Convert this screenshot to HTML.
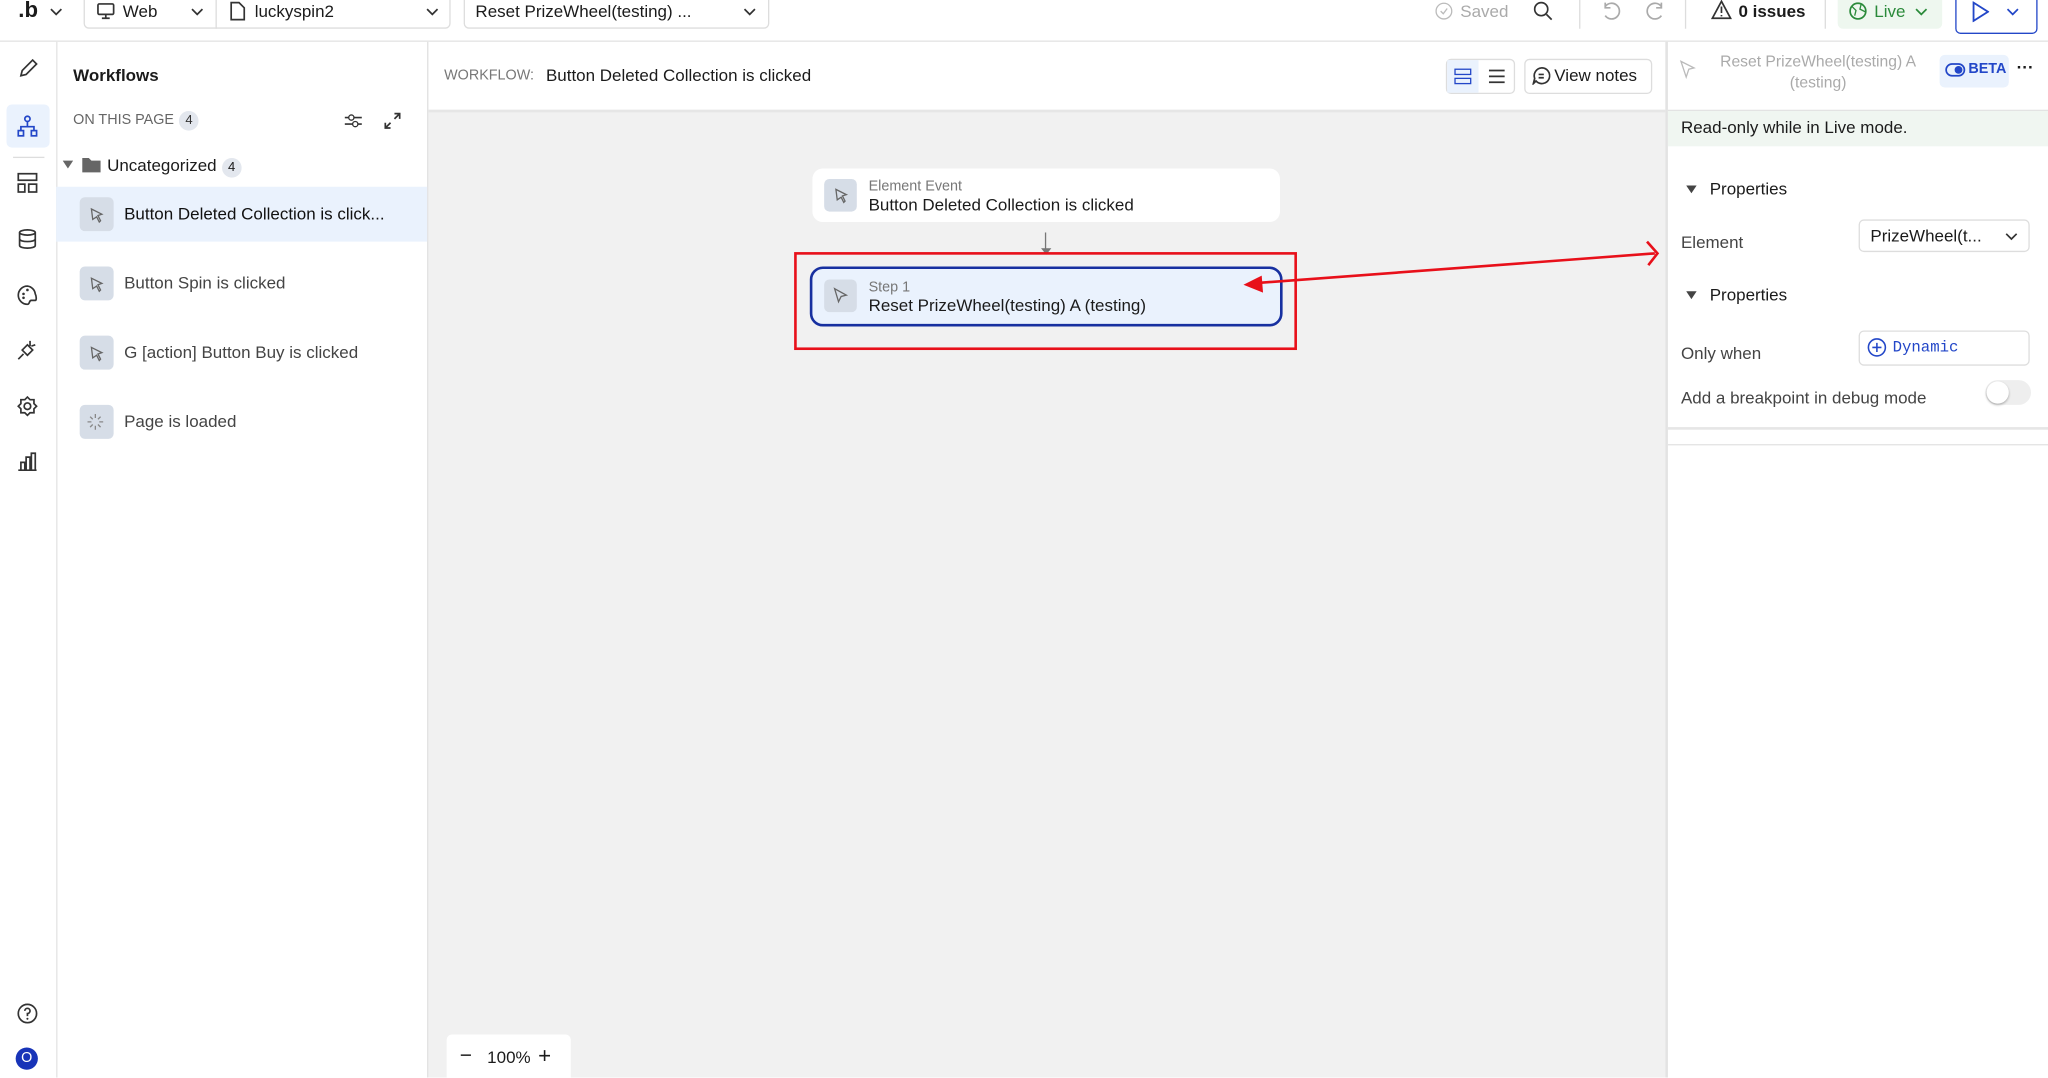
<!DOCTYPE html>
<html><head><meta charset="utf-8">
<style>
*{box-sizing:border-box;margin:0;padding:0}
html,body{width:2048px;height:1077px;overflow:hidden;background:#fff}
#w{position:absolute;left:0;top:0;width:1568px;height:825px;transform:scale(1.30612);transform-origin:0 0;font-family:"Liberation Sans",sans-serif;color:#1b1b1b;font-size:13px;overflow:hidden}
.a{position:absolute}
.ic{stroke:#333;fill:none;stroke-width:1.3}
.gray{color:#777}
.item{position:absolute;left:43px;width:284px;height:42px}
.item .sq{position:absolute;left:18px;top:8px;width:26px;height:26px;background:#d6dde7;border-radius:4px}
.item .t{position:absolute;left:52px;top:13px;font-size:13px}
.badge{display:inline-block;width:15px;height:15px;border-radius:8px;background:#e3e7ee;font-size:10px;text-align:center;line-height:15px;margin-left:4px}
</style></head><body><div id="w">
<!-- top bar -->
<div class="a" style="left:0;top:0;width:1568px;height:32px;border-bottom:1px solid #e3e3e3;background:#fff"></div>
<div class="a" style="left:14px;top:-2px;font-size:17px;font-weight:bold">.b</div>
<svg class="a" style="left:38px;top:5px" width="10" height="8"><path class="ic" d="M1 2l4 4 4-4"/></svg>
<div class="a" style="left:64px;top:-4px;width:281px;height:26px;border:1px solid #ddd;border-radius:4px"></div>
<div class="a" style="left:165px;top:0;width:1px;height:22px;background:#ddd"></div>
<svg class="a" style="left:74px;top:2px" width="14" height="13"><rect class="ic" x="1" y="1" width="12" height="8" rx="1"/><path class="ic" d="M7 9v3M4 12h6"/></svg>
<div class="a" style="left:94px;top:1px">Web</div>
<svg class="a" style="left:146px;top:5px" width="10" height="8"><path class="ic" d="M1 2l4 4 4-4"/></svg>
<svg class="a" style="left:176px;top:1px" width="12" height="15"><path class="ic" d="M1 1h6l4 4v9H1z"/></svg>
<div class="a" style="left:195px;top:1px">luckyspin2</div>
<svg class="a" style="left:326px;top:5px" width="10" height="8"><path class="ic" d="M1 2l4 4 4-4"/></svg>
<div class="a" style="left:355px;top:-4px;width:234px;height:26px;border:1px solid #ddd;border-radius:4px"></div>
<div class="a" style="left:364px;top:1px">Reset PrizeWheel(testing) ...</div>
<svg class="a" style="left:569px;top:5px" width="10" height="8"><path class="ic" d="M1 2l4 4 4-4"/></svg>
<svg class="a" style="left:1098px;top:1px" width="15" height="15"><circle cx="7.5" cy="7.5" r="6" fill="none" stroke="#bbb"/><path d="M5 7.5l2 2 3-4" fill="none" stroke="#bbb"/></svg>
<div class="a" style="left:1118px;top:1px;color:#aaa">Saved</div>
<svg class="a" style="left:1173px;top:0" width="16" height="16"><circle class="ic" cx="7" cy="7" r="5"/><path class="ic" d="M11 11l4 4"/></svg>
<div class="a" style="left:1209px;top:0;width:1px;height:22px;background:#ddd"></div>
<svg class="a" style="left:1226px;top:1px" width="15" height="15"><path d="M3 4a6 6 0 1 1 0 7M3 1v4h4" fill="none" stroke="#aaa" stroke-width="1.3"/></svg>
<svg class="a" style="left:1260px;top:1px" width="15" height="15"><path d="M12 4a6 6 0 1 0 0 7M12 1v4H8" fill="none" stroke="#aaa" stroke-width="1.3"/></svg>
<div class="a" style="left:1290px;top:0;width:1px;height:22px;background:#ddd"></div>
<svg class="a" style="left:1310px;top:0" width="16" height="15"><path class="ic" d="M8 1l7 13H1z"/><path class="ic" d="M8 5v5M8 11.5v1"/></svg>
<div class="a" style="left:1331px;top:1px;font-weight:bold;font-size:13px">0 issues</div>
<div class="a" style="left:1397px;top:0;width:1px;height:22px;background:#ddd"></div>
<div class="a" style="left:1407px;top:-4px;width:80px;height:26px;background:#eef7ef;border-radius:4px"></div>
<svg class="a" style="left:1415px;top:1px" width="15" height="15"><circle cx="7.5" cy="7.5" r="6" fill="none" stroke="#2a8a3a" stroke-width="1.3"/><path d="M3 4l3 3-1 4M10 2l-1 4 4 2" fill="none" stroke="#2a8a3a"/></svg>
<div class="a" style="left:1435px;top:1px;color:#2a8a3a">Live</div>
<svg class="a" style="left:1466px;top:5px" width="10" height="8"><path d="M1 2l4 4 4-4" fill="none" stroke="#2a8a3a" stroke-width="1.3"/></svg>
<div class="a" style="left:1497px;top:-4px;width:63px;height:30px;border:1.5px solid #2347c8;border-radius:4px"></div>
<svg class="a" style="left:1509px;top:1px" width="14" height="16"><path d="M2 1l11 7-11 7z" fill="none" stroke="#2347c8" stroke-width="1.4"/></svg>
<svg class="a" style="left:1536px;top:5px" width="10" height="8"><path d="M1 2l4 4 4-4" fill="none" stroke="#2347c8" stroke-width="1.3"/></svg>

<!-- icon rail -->
<div class="a" style="left:43px;top:32px;width:1px;height:793px;background:#e3e3e3"></div>
<svg class="a" style="left:13px;top:45px" width="16" height="16"><path class="ic" d="M3 13l1-4 8-8 3 3-8 8z"/></svg>
<div class="a" style="left:5px;top:80px;width:33px;height:33px;background:#eaf2fd;border-radius:4px"></div>
<svg class="a" style="left:13px;top:88px" width="16" height="18"><g fill="none" stroke="#2347c8" stroke-width="1.3"><circle cx="8" cy="3" r="2"/><path d="M8 5v4M3 12V9h10v3"/><rect x="1" y="12" width="4" height="4"/><rect x="11" y="12" width="4" height="4"/></g></svg>
<div class="a" style="left:10px;top:120px;width:24px;height:1px;background:#ddd"></div>
<svg class="a" style="left:13px;top:132px" width="16" height="16"><rect class="ic" x="1" y="1" width="14" height="5"/><rect class="ic" x="1" y="9" width="5" height="6"/><rect class="ic" x="9" y="9" width="6" height="6"/></svg>
<svg class="a" style="left:13px;top:175px" width="16" height="16"><ellipse class="ic" cx="8" cy="3" rx="6" ry="2"/><path class="ic" d="M2 3v10c0 2.6 12 2.6 12 0V3M2 8c0 2.6 12 2.6 12 0"/></svg>
<svg class="a" style="left:13px;top:218px" width="16" height="16"><path class="ic" d="M8 1a7 7 0 0 0 0 14c2 0 1-3 3-3h3c1 0 1-3 0-5A7 7 0 0 0 8 1z"/><circle cx="5" cy="7" r="1" fill="#333"/><circle cx="8" cy="4" r="1" fill="#333"/><circle cx="5" cy="10" r="1" fill="#333"/></svg>
<svg class="a" style="left:13px;top:260px" width="16" height="16"><path class="ic" d="M10 1v4M14 4l-3 1M4 8l4-4 4 4-4 4zM5 11l-4 4"/></svg>
<svg class="a" style="left:13px;top:303px" width="16" height="16"><circle class="ic" cx="8" cy="8" r="2.5"/><path class="ic" d="M8 1l2 2 3 0 0 3 2 2-2 2 0 3-3 0-2 2-2-2-3 0 0-3-2-2 2-2 0-3 3 0z"/></svg>
<svg class="a" style="left:13px;top:345px" width="16" height="16"><path class="ic" d="M1 15h14M3 15V9h3v6M7 15V5h3v10M11 15V2h3v13"/></svg>
<svg class="a" style="left:13px;top:768px" width="16" height="16"><circle class="ic" cx="8" cy="8" r="7"/><path class="ic" d="M6 6a2 2 0 1 1 2 2v2"/><circle cx="8" cy="12" r=".8" fill="#333"/></svg>
<div class="a" style="left:12px;top:802px;width:17px;height:17px;border-radius:9px;background:#1834b8;color:#fff;font-size:11px;text-align:center;line-height:17px">O</div>

<!-- workflows panel -->
<div class="a" style="left:327px;top:32px;width:1px;height:793px;background:#e0e0e0"></div>
<div class="a" style="left:56px;top:50px;font-weight:bold;font-size:13px">Workflows</div>
<div class="a" style="left:56px;top:85px;font-size:11px;color:#666">ON THIS PAGE<span class="badge" style="color:#333">4</span></div>
<svg class="a" style="left:263px;top:85px" width="15" height="15"><path class="ic" d="M1 5h13M1 10h13"/><circle cx="6" cy="5" r="2" fill="#fff" stroke="#333"/><circle cx="9" cy="10" r="2" fill="#fff" stroke="#333"/></svg>
<svg class="a" style="left:293px;top:85px" width="15" height="15"><path class="ic" d="M9 2h4v4M13 2L9 6M6 13H2V9M2 13l4-4"/></svg>
<svg class="a" style="left:48px;top:122px" width="8" height="8"><path d="M0 1h8L4 7z" fill="#666"/></svg>
<svg class="a" style="left:62px;top:119px" width="16" height="14"><path d="M1 2h5l2 2h7v9H1z" fill="#666"/></svg>
<div class="a" style="left:82px;top:119px;font-size:13px">Uncategorized<span class="badge">4</span></div>
<div class="item" style="top:143px;background:#eaf2fd"><div class="sq"></div><div class="t" style="color:#111">Button Deleted Collection is click...</div></div>
<div class="item" style="top:196px"><div class="sq"></div><div class="t" style="color:#444">Button Spin is clicked</div></div>
<div class="item" style="top:249px"><div class="sq"></div><div class="t" style="color:#444">G [action] Button Buy is clicked</div></div>
<div class="item" style="top:302px"><div class="sq"></div><div class="t" style="color:#444">Page is loaded</div></div>
<svg class="a" style="left:66px;top:157px" width="14" height="14"><path d="M4 3l8 4-3 1 2 4-1 1-2-4-3 2z" fill="none" stroke="#666"/></svg>
<svg class="a" style="left:66px;top:210px" width="14" height="14"><path d="M4 3l8 4-3 1 2 4-1 1-2-4-3 2z" fill="none" stroke="#666"/></svg>
<svg class="a" style="left:66px;top:263px" width="14" height="14"><path d="M4 3l8 4-3 1 2 4-1 1-2-4-3 2z" fill="none" stroke="#666"/></svg>
<svg class="a" style="left:66px;top:316px" width="14" height="14"><path d="M7 1v3M7 10v3M1 7h3M10 7h3M3 3l2 2M9 9l2 2M3 11l2-2M9 5l2-2" stroke="#888"/></svg>

<!-- canvas -->
<div class="a" style="left:328px;top:84px;width:947px;height:741px;background:#f1f1f1;border-top:2px solid #e6e6e6"></div>
<div class="a" style="left:340px;top:52px;font-size:11px;color:#777">WORKFLOW:</div>
<div class="a" style="left:418px;top:50px;font-size:13px">Button Deleted Collection is clicked</div>
<div class="a" style="left:1107px;top:45px;width:53px;height:27px;border:1px solid #ddd;border-radius:4px"></div>
<div class="a" style="left:1108px;top:46px;width:24px;height:25px;background:#eaf2fd"></div>
<svg class="a" style="left:1113px;top:52px" width="14" height="13"><rect x="1" y="1" width="12" height="4" fill="none" stroke="#2347c8"/><rect x="1" y="8" width="12" height="4" fill="none" stroke="#2347c8"/></svg>
<svg class="a" style="left:1139px;top:52px" width="14" height="13"><path class="ic" d="M1 2h12M1 6.5h12M1 11h12"/></svg>
<div class="a" style="left:1167px;top:45px;width:98px;height:27px;border:1px solid #ddd;border-radius:4px;background:#fff"></div>
<svg class="a" style="left:1173px;top:51px" width="14" height="14"><path class="ic" d="M7 1a6 6 0 1 1-4 10l-2 2 1-4A6 6 0 0 1 7 1zM5 6h4M5 8.5h4"/></svg>
<div class="a" style="left:1190px;top:50px;font-size:13px">View notes</div>

<div class="a" style="left:622px;top:129px;width:358px;height:41px;background:#fff;border-radius:8px"></div>
<div class="a" style="left:631px;top:137px;width:25px;height:25px;background:#d6dde7;border-radius:4px"></div>
<svg class="a" style="left:636px;top:142px" width="14" height="14"><path d="M4 3l8 4-3 1 2 4-1 1-2-4-3 2z" fill="none" stroke="#666"/></svg>
<div class="a" style="left:665px;top:137px;font-size:11px;color:#777">Element Event</div>
<div class="a" style="left:665px;top:149px;font-size:13px">Button Deleted Collection is clicked</div>
<div class="a" style="left:800px;top:178px;width:1px;height:16px;background:#777"></div>
<svg class="a" style="left:797px;top:190px" width="8" height="6"><path d="M0 0h8L4 5z" fill="#777"/></svg>

<div class="a" style="left:620px;top:204px;width:362px;height:46px;background:#eaf2fd;border:2.5px solid #1730a0;border-radius:10px"></div>
<div class="a" style="left:631px;top:214px;width:25px;height:25px;background:#d6dde7;border-radius:4px"></div>
<svg class="a" style="left:636px;top:219px" width="14" height="14"><path d="M3 2l9 5-4 1-2 4z" fill="none" stroke="#666"/></svg>
<div class="a" style="left:665px;top:214px;font-size:11px;color:#777">Step 1</div>
<div class="a" style="left:665px;top:226px;font-size:13px">Reset PrizeWheel(testing) A (testing)</div>
<div class="a" style="left:608px;top:193px;width:385px;height:75px;border:2px solid #e8101a"></div>
<svg class="a" style="left:0;top:0" width="1568" height="825"><line x1="958" y1="217" x2="1267" y2="194" stroke="#e8101a" stroke-width="2"/><path d="M952 218l14-7 1 13z" fill="#e8101a"/><path d="M1261 185l8 9-7 9" fill="none" stroke="#e8101a" stroke-width="2"/></svg>

<div class="a" style="left:342px;top:792px;width:95px;height:40px;background:#fff;border-radius:4px"></div>
<div class="a" style="left:352px;top:800px;font-size:16px">−</div>
<div class="a" style="left:373px;top:802px;font-size:13px">100%</div>
<div class="a" style="left:412px;top:799px;font-size:17px">+</div>

<!-- right panel -->
<div class="a" style="left:1275px;top:32px;width:2px;height:793px;background:#e3e3e3"></div>
<div class="a" style="left:1277px;top:84px;width:291px;height:1px;background:#e3e3e3"></div>
<svg class="a" style="left:1285px;top:45px" width="14" height="16"><path d="M2 2l10 5-4 1-2 6z" fill="none" stroke="#bbb"/></svg>
<div class="a" style="left:1300px;top:39px;width:184px;text-align:center;font-size:12px;color:#aaa;line-height:16px">Reset PrizeWheel(testing) A<br>(testing)</div>
<div class="a" style="left:1485px;top:42px;width:53px;height:25px;background:#eaf2fd;border-radius:4px"></div>
<svg class="a" style="left:1489px;top:48px" width="16" height="12"><rect x="1" y="1" width="14" height="9" rx="4.5" fill="none" stroke="#2347c8" stroke-width="1.3"/><circle cx="10.5" cy="5.5" r="3" fill="#2347c8"/></svg>
<div class="a" style="left:1507px;top:47px;font-size:11px;font-weight:bold;color:#2347c8">BETA</div>
<div class="a" style="left:1544px;top:44px;font-size:13px;font-weight:bold">···</div>
<div class="a" style="left:1277px;top:85px;width:291px;height:27px;background:#f0f6f1"></div>
<div class="a" style="left:1287px;top:90px;font-size:13px">Read-only while in Live mode.</div>
<svg class="a" style="left:1291px;top:141px" width="8" height="8"><path d="M0 1h8L4 7z" fill="#444"/></svg>
<div class="a" style="left:1309px;top:137px;font-size:13px">Properties</div>
<div class="a" style="left:1287px;top:178px;font-size:13px;color:#444">Element</div>
<div class="a" style="left:1423px;top:168px;width:131px;height:25px;border:1px solid #ddd;border-radius:4px"></div>
<div class="a" style="left:1432px;top:173px;font-size:13px">PrizeWheel(t...</div>
<svg class="a" style="left:1535px;top:177px" width="10" height="8"><path class="ic" d="M1 2l4 4 4-4"/></svg>
<svg class="a" style="left:1291px;top:222px" width="8" height="8"><path d="M0 1h8L4 7z" fill="#444"/></svg>
<div class="a" style="left:1309px;top:218px;font-size:13px">Properties</div>
<div class="a" style="left:1287px;top:263px;font-size:13px;color:#444">Only when</div>
<div class="a" style="left:1423px;top:253px;width:131px;height:27px;border:1px solid #ddd;border-radius:4px"></div>
<svg class="a" style="left:1429px;top:258px" width="16" height="16"><circle cx="8" cy="8" r="6.5" fill="none" stroke="#2347c8" stroke-width="1.2"/><path d="M8 4.5v7M4.5 8h7" stroke="#2347c8" stroke-width="1.2"/></svg>
<div class="a" style="left:1449px;top:259px;font-size:12px;color:#2347c8;font-family:'Liberation Mono',monospace">Dynamic</div>
<div class="a" style="left:1287px;top:297px;font-size:13px;color:#444">Add a breakpoint in debug mode</div>
<div class="a" style="left:1520px;top:291px;width:35px;height:19px;border-radius:10px;background:#eee"></div>
<div class="a" style="left:1521px;top:292px;width:17px;height:17px;border-radius:9px;background:#fff;box-shadow:0 1px 2px rgba(0,0,0,.3)"></div>
<div class="a" style="left:1277px;top:327px;width:291px;height:2px;background:#e6e6e6"></div>
<div class="a" style="left:1277px;top:340px;width:291px;height:1px;background:#e3e3e3"></div>
</div></body></html>
